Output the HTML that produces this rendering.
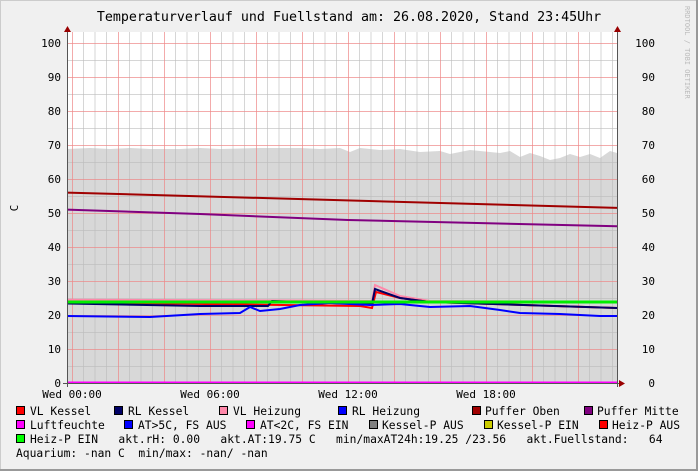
<!DOCTYPE html>
<html><head><style>
html,body{margin:0;padding:0;background:#f0f0f0}
svg{display:block}
text{font-family:"DejaVu Sans Mono","Liberation Mono",monospace;font-size:11px;fill:#000}
.lg{font-size:11.3px}
</style></head><body>
<svg width="698" height="471" viewBox="0 0 698 471" xmlns="http://www.w3.org/2000/svg">
<defs>
<pattern id="g" x="72" y="383" width="46" height="34" patternUnits="userSpaceOnUse">
<line x1="11.5" y1="0" x2="11.5" y2="34" stroke="#bbb" stroke-opacity=".6" stroke-width="1"/>
<line x1="23" y1="0" x2="23" y2="34" stroke="#bbb" stroke-opacity=".6"/>
<line x1="34.5" y1="0" x2="34.5" y2="34" stroke="#bbb" stroke-opacity=".6"/>
<line x1="0" y1="17.5" x2="46" y2="17.5" stroke="#bbb" stroke-opacity=".6"/>
<line x1="0.5" y1="0" x2="0.5" y2="34" stroke="#e88" stroke-opacity=".7"/>
<line x1="0" y1="0.5" x2="46" y2="0.5" stroke="#e88" stroke-opacity=".7"/>
</pattern>
<clipPath id="c"><rect x="67" y="32" width="550" height="351"/></clipPath>
</defs>
<rect x="0" y="0" width="698" height="471" fill="#f0f0f0"/>
<rect x="0" y="0" width="697" height="470" fill="none" stroke="#ccc" stroke-width="2"/>
<line x1="0" y1="470" x2="698" y2="470" stroke="#999" stroke-width="2"/>
<line x1="697" y1="0" x2="697" y2="471" stroke="#999" stroke-width="2"/>
<text x="349" y="21" text-anchor="middle" style="font-size:13.3px">Temperaturverlauf und Fuellstand am: 26.08.2020, Stand 23:45Uhr</text>
<text transform="translate(685,6) rotate(90)" style="font-size:7px;fill:#bbb">RRDTOOL / TOBI OETIKER</text>
<text transform="translate(18,208) rotate(-90)" text-anchor="middle">C</text>
<rect x="67" y="32" width="550" height="351" fill="#fff"/>
<polygon fill="#d8d8d8" points="67,383 67,149 90,148 110,149 130,148 150,149 180,149 200,148 220,149 260,148 300,148 320,149 340,148 350,152 360,148 380,150 400,149 420,152 440,151 450,154 470,150 490,152 500,153 510,151 520,157 530,153 540,156 550,160 560,158 570,154 580,157 590,154 600,158 610,151 617,153 617,383"/>
<rect x="67" y="32" width="550" height="351" fill="url(#g)" clip-path="url(#c)"/>
<g clip-path="url(#c)" fill="none" stroke-width="2">
<polyline stroke="#a00000" points="67,192.6 617,207.9"/>
<polyline stroke="#800080" points="67,209.6 200,214 348,220 617,226.3"/>
<polyline stroke="#ff88aa" points="67,299.7 300,300.5 372,301 375,285 400,296 430,301 617,302"/>
<polyline stroke="#ff0000" points="67,302.3 360,306 372,308 376,292 400,298 430,302 617,308"/>
<polyline stroke="#000066" points="67,303.5 200,306 268,306 272,301 360,304 372,304 375,289 400,298 430,302 617,308"/>
<polyline stroke="#0000ff" points="67,316 150,317 200,314 240,313 250,307 260,311 280,309 300,305 330,303 370,305 400,304 430,307 470,306 500,310 520,313 560,314 600,316 617,316"/>
<polyline stroke="#00ee00" stroke-width="3" points="67,302 617,302"/>
<polyline stroke="#ff00ff" points="67,382.5 617,382.5"/>
</g>
<line x1="67.5" y1="28" x2="67.5" y2="387" stroke="#555"/>
<line x1="617.5" y1="28" x2="617.5" y2="387" stroke="#555"/>
<line x1="63" y1="383.5" x2="622" y2="383.5" stroke="#555"/>
<polygon points="64,32 71,32 67.5,26" fill="#900"/>
<polygon points="614,32 621,32 617.5,26" fill="#900"/>
<polygon points="619,380 619,387 625,383.5" fill="#900"/>
<g text-anchor="end">
<text x="61" y="47">100</text><text x="61" y="81">90</text><text x="61" y="115">80</text><text x="61" y="149">70</text><text x="61" y="183">60</text><text x="61" y="217">50</text><text x="61" y="251">40</text><text x="61" y="285">30</text><text x="61" y="319">20</text><text x="61" y="353">10</text><text x="61" y="387">0</text>
<text x="655" y="47">100</text><text x="655" y="81">90</text><text x="655" y="115">80</text><text x="655" y="149">70</text><text x="655" y="183">60</text><text x="655" y="217">50</text><text x="655" y="251">40</text><text x="655" y="285">30</text><text x="655" y="319">20</text><text x="655" y="353">10</text><text x="655" y="387">0</text>
</g>
<g text-anchor="middle" style="font-size:10.5px">
<text x="72" y="398">Wed 00:00</text><text x="210" y="398">Wed 06:00</text><text x="348" y="398">Wed 12:00</text><text x="486" y="398">Wed 18:00</text>
</g>
<g stroke="#000" stroke-width="1">
<rect x="16.5" y="406.5" width="8" height="8" fill="#ff0000"/>
<rect x="114.5" y="406.5" width="8" height="8" fill="#000066"/>
<rect x="219.5" y="406.5" width="8" height="8" fill="#ff88aa"/>
<rect x="338.5" y="406.5" width="8" height="8" fill="#0000ff"/>
<rect x="472.5" y="406.5" width="8" height="8" fill="#a00000"/>
<rect x="584.5" y="406.5" width="8" height="8" fill="#800080"/>
<rect x="16.5" y="420.5" width="8" height="8" fill="#ff00ff"/>
<rect x="124.5" y="420.5" width="8" height="8" fill="#0000ff"/>
<rect x="246.5" y="420.5" width="8" height="8" fill="#ff00ff"/>
<rect x="369.5" y="420.5" width="8" height="8" fill="#808080"/>
<rect x="484.5" y="420.5" width="8" height="8" fill="#cccc00"/>
<rect x="599.5" y="420.5" width="8" height="8" fill="#ff0000"/>
<rect x="16.5" y="434.5" width="8" height="8" fill="#00ff00"/>
</g>
<g class="lg">
<text class="lg" x="30" y="415">VL Kessel</text>
<text class="lg" x="128" y="415">RL Kessel</text>
<text class="lg" x="233" y="415">VL Heizung</text>
<text class="lg" x="352" y="415">RL Heizung</text>
<text class="lg" x="485" y="415">Puffer Oben</text>
<text class="lg" x="597" y="415">Puffer Mitte</text>
<text class="lg" x="30" y="429">Luftfeuchte</text>
<text class="lg" x="138" y="429">AT&gt;5C, FS AUS</text>
<text class="lg" x="260" y="429">AT&lt;2C, FS EIN</text>
<text class="lg" x="382" y="429">Kessel-P AUS</text>
<text class="lg" x="497" y="429">Kessel-P EIN</text>
<text class="lg" x="612" y="429">Heiz-P AUS</text>
<text class="lg" x="30" y="443" xml:space="preserve">Heiz-P EIN   akt.rH: 0.00   akt.AT:19.75 C   min/maxAT24h:19.25 /23.56   akt.Fuellstand:   64</text>
<text class="lg" x="16" y="457" xml:space="preserve">Aquarium: -nan C  min/max: -nan/ -nan</text>
</g>
</svg>
</body></html>
